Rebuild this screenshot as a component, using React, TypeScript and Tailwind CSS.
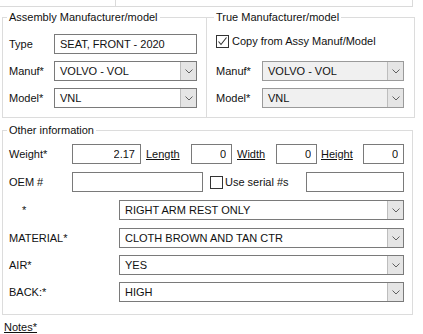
import React from 'react';

const FONT = { fontFamily: '"Liberation Sans", Arial, sans-serif' };

const Chevron: React.FC = () => (
  <svg width="8" height="5" viewBox="0 0 8 5" className="block">
    <polyline points="0.5,0.5 4,4 7.5,0.5" fill="none" stroke="#606060" strokeWidth="1" />
  </svg>
);

const TextBox: React.FC<{ value?: string; width: string; right?: boolean }> = ({ value = '', width, right }) => (
  <div
    className={`${width} h-[20px] border border-[#7a7a7a] bg-white flex items-center px-[5px] ${right ? 'justify-end' : ''}`}
  >
    <span className="truncate">{value}</span>
  </div>
);

const ComboBox: React.FC<{ value: string; width: string; disabled?: boolean }> = ({ value, width, disabled }) => (
  <div
    className={`${width} h-[20px] border flex ${disabled ? 'bg-[#f0f0f0] border-[#9a9a9a]' : 'bg-white border-[#7a7a7a]'}`}
  >
    <div className="flex-1 flex items-center pl-[5px] truncate">{value}</div>
    <div className="w-[16px] bg-[#e5e5e5] border-l border-[#bdbdbd] flex items-center justify-center">
      <Chevron />
    </div>
  </div>
);

const CheckBox: React.FC<{ checked?: boolean }> = ({ checked }) => (
  <div className="w-[13px] h-[13px] border border-[#333333] bg-white flex items-center justify-center">
    {checked && (
      <svg width="11" height="11" viewBox="0 0 11 11" className="block">
        <polyline points="1.5,5.5 4,8.5 9.5,1.5" fill="none" stroke="#333333" strokeWidth="1.1" />
      </svg>
    )}
  </div>
);

const Row: React.FC<{ children: React.ReactNode; className?: string }> = ({ children, className = '' }) => (
  <div className={`flex items-center h-[20px] ${className}`}>{children}</div>
);

const App: React.FC = () => {
  return (
    <div className="w-[423px] h-[334px] bg-white overflow-hidden text-[11px] text-[#111111]" style={FONT}>
      {/* strip of the panels above */}
      <div className="flex h-[7px]">
        <div className="w-[116px] border-r border-b border-[#dadada]" />
        <div className="w-[297px] border-r border-b border-[#dadada]" />
      </div>

      <div className="flex pl-[2px] mt-[3px]">
        <fieldset className="w-[205px] h-[108px] border border-[#dcdcdc]">
          <legend className="ml-[4px] px-[2px] leading-[14px]">Assembly Manufacturer/model</legend>
          <div className="pl-[6px] pt-[10px]">
            <Row>
              <span className="w-[45px]">Type</span>
              <TextBox value="SEAT, FRONT - 2020" width="w-[143px]" />
            </Row>
            <Row className="mt-[7px]">
              <span className="w-[45px]">Manuf*</span>
              <ComboBox value="VOLVO - VOL" width="w-[143px]" />
            </Row>
            <Row className="mt-[7px]">
              <span className="w-[45px]">Model*</span>
              <ComboBox value="VNL" width="w-[143px]" />
            </Row>
          </div>
        </fieldset>

        <fieldset className="w-[208px] h-[108px] border border-l-0 border-[#dcdcdc]">
          <legend className="ml-[7px] px-[2px] leading-[14px]">True Manufacturer/model</legend>
          <div className="pl-[9px] pt-[7px]">
            <Row>
              <CheckBox checked />
              <span className="ml-[3px]">Copy from Assy Manuf/Model</span>
            </Row>
            <Row className="mt-[10px]">
              <span className="w-[46px]">Manuf*</span>
              <ComboBox value="VOLVO - VOL" width="w-[142px]" disabled />
            </Row>
            <Row className="mt-[7px]">
              <span className="w-[46px]">Model*</span>
              <ComboBox value="VNL" width="w-[142px]" disabled />
            </Row>
          </div>
        </fieldset>
      </div>

      <fieldset className="ml-[2px] mt-[5px] w-[411px] h-[192px] border border-[#dcdcdc]">
        <legend className="ml-[4px] px-[2px] leading-[14px]">Other information</legend>
        <div className="pl-[6px] pt-[7px]">
          <Row>
            <span className="w-[63px]">Weight*</span>
            <TextBox value="2.17" width="w-[69px]" right />
            <span className="w-[50px] pl-[5px] underline">Length</span>
            <TextBox value="0" width="w-[41px]" right />
            <span className="w-[44px] pl-[5px] underline">Width</span>
            <TextBox value="0" width="w-[41px]" right />
            <span className="w-[46px] pl-[4px] underline">Height</span>
            <TextBox value="0" width="w-[41px]" right />
          </Row>
          <Row className="mt-[8px]">
            <span className="w-[63px]">OEM #</span>
            <TextBox width="w-[131px]" />
            <div className="ml-[7px]">
              <CheckBox />
            </div>
            <span className="w-[83px] pl-[2px]">Use serial #s</span>
            <TextBox width="w-[98px]" />
          </Row>
          <Row className="mt-[8px]">
            <span className="w-[110px] pl-[13px]">*</span>
            <ComboBox value="RIGHT ARM REST ONLY" width="w-[285px]" />
          </Row>
          <Row className="mt-[8px]">
            <span className="w-[110px]">MATERIAL*</span>
            <ComboBox value="CLOTH BROWN AND TAN CTR" width="w-[285px]" />
          </Row>
          <Row className="mt-[7px]">
            <span className="w-[110px]">AIR*</span>
            <ComboBox value="YES" width="w-[285px]" />
          </Row>
          <Row className="mt-[7px]">
            <span className="w-[110px]">BACK:*</span>
            <ComboBox value="HIGH" width="w-[285px]" />
          </Row>
        </div>
      </fieldset>

      <div className="pl-[4px] mt-[6px] h-[12px] leading-[12px]">
        <span className="underline">Notes*</span>
      </div>
      <div className="h-[1px] mt-[1px] bg-[#2f7db5]" />
    </div>
  );
};

export default App;
